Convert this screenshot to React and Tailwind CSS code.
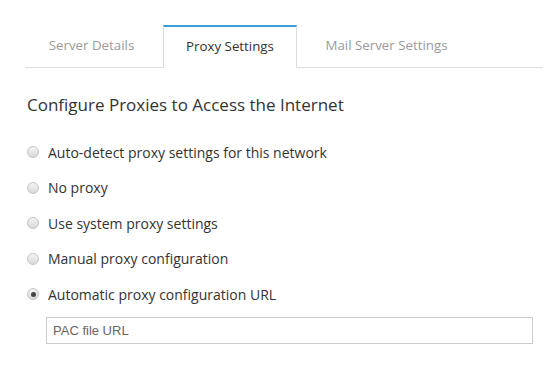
import React, { useState } from 'react';

const options = [
  'Auto-detect proxy settings for this network',
  'No proxy',
  'Use system proxy settings',
  'Manual proxy configuration',
  'Automatic proxy configuration URL',
];

function Radio({ checked }) {
  return (
    <span className="relative flex h-[12px] w-[12px] shrink-0 items-center justify-center rounded-full border border-[#c4c4c4] bg-gradient-to-b from-[#f4f4f4] to-[#d9d9d9]">
      {checked && <span className="h-[5px] w-[5px] rounded-full bg-[#444]" />}
    </span>
  );
}

export default function App() {
  const [selected, setSelected] = useState(4);

  return (
    <div className="h-[369px] w-[554px] bg-white font-['Open_Sans',sans-serif]">
      {/* Tabs */}
      <div className="ml-[25px] mr-[11px] flex border-b border-[#dddddd] pt-[25px] text-[13.3px]">
        <div className="flex h-[42px] w-[138px] items-center justify-center pr-[5px] text-[#9a9a9a]">
          Server Details
        </div>
        <div className="-mb-px flex h-[43px] w-[134px] items-center justify-center border-x border-t-2 border-[#dddddd] border-t-[#3a9fd9] bg-white pb-px text-[#333]">
          Proxy Settings
        </div>
        <div className="flex h-[42px] w-[179px] items-center justify-center text-[#9a9a9a]">
          Mail Server Settings
        </div>
      </div>

      <div className="pl-[27px] pr-[21px]">
        <h2 className="mt-[25px] text-[17px] leading-[24px] text-[#333]">
          Configure Proxies to Access the Internet
        </h2>

        <div className="mt-[25px] flex flex-col gap-[15.5px]">
          {options.map((label, i) => (
            <label
              key={label}
              onClick={() => setSelected(i)}
              className="flex h-[20px] cursor-pointer items-center gap-[9px] text-[14px] text-[#333]"
            >
              <Radio checked={selected === i} />
              <span>{label}</span>
            </label>
          ))}
        </div>

        <input
          type="text"
          placeholder="PAC file URL"
          className="mt-[13px] ml-[19px] h-[27px] w-[487px] border border-[#cccccc] px-[6px] font-['Liberation_Sans',sans-serif] text-[13px] text-[#333] outline-none placeholder:text-[#666]"
        />
      </div>
    </div>
  );
}
